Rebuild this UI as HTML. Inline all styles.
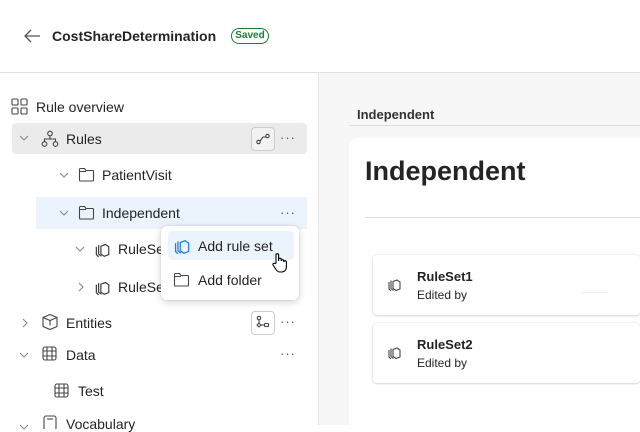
<!DOCTYPE html>
<html><head><style>
*{box-sizing:border-box;margin:0;padding:0}
body{width:640px;height:425px;overflow:hidden;font-family:"Liberation Sans",sans-serif;background:#fff;color:#242424;position:relative}
.abs{position:absolute}
.t{font-size:14px;color:#242424;white-space:nowrap}
svg{position:absolute;fill:none;stroke:#444;stroke-width:1.1}
.dots{position:absolute;font-size:13px;color:#555;letter-spacing:1px}
</style></head><body>
<!-- header -->
<svg style="left:22px;top:27px" width="20" height="18" viewBox="0 0 20 18"><path d="M18 9H3M9 3L3 9l6 6" stroke="#555" stroke-width="1.3"/></svg>
<div class="abs" style="left:52px;top:28px;font-size:14px;font-weight:bold">CostShareDetermination</div>
<div class="abs" style="left:231px;top:28px;width:38px;height:16px;border:1.3px solid #1a7f37;border-radius:8px;font-size:10px;font-weight:bold;color:#1a7f37;text-align:center;line-height:13px">Saved</div>
<div class="abs" style="left:0;top:72px;width:640px;height:1px;background:#e0e0e0"></div>
<!-- right panel -->
<div class="abs" style="left:318px;top:73px;width:322px;height:352px;background:#f7f7f7;border-left:1px solid #e6e6e6"></div>
<div class="abs" style="left:357px;top:107px;font-size:13px;font-weight:bold;color:#333">Independent</div>
<div class="abs" style="left:349px;top:125px;width:291px;height:1px;background:#ddd"></div>
<div class="abs" style="left:349px;top:138px;width:291px;height:287px;background:#fff;border-radius:8px 0 0 0"></div>
<div class="abs" style="left:365px;top:156px;font-size:27px;font-weight:bold;color:#242424">Independent</div>
<div class="abs" style="left:365px;top:217px;width:275px;height:1px;background:#e0e0e0"></div>
<div class="abs" style="left:373px;top:255px;width:267px;height:60px;background:#fff;border-radius:4px;box-shadow:0 0 2px rgba(0,0,0,.15),0 1px 2px rgba(0,0,0,.12)"></div>
<div class="abs" style="left:373px;top:323px;width:267px;height:60px;background:#fff;border-radius:4px;box-shadow:0 0 2px rgba(0,0,0,.15),0 1px 2px rgba(0,0,0,.12)"></div>
<svg style="left:386px;top:276px" width="16" height="16" viewBox="0 0 16 16"><path d="M7 5.5l4-1.5 3 2v7l-4 1.5-3-2z"/><path d="M5 4.5v8l2.5 2M3 6v7l2 2"/></svg>
<svg style="left:386px;top:344px" width="16" height="16" viewBox="0 0 16 16"><path d="M7 5.5l4-1.5 3 2v7l-4 1.5-3-2z"/><path d="M5 4.5v8l2.5 2M3 6v7l2 2"/></svg>
<div class="abs" style="left:417px;top:269px;font-size:13px;font-weight:bold">RuleSet1</div>
<div class="abs" style="left:417px;top:288px;font-size:12px">Edited by</div>
<div class="abs" style="left:582px;top:292px;width:26px;height:1px;background:#eee"></div>
<div class="abs" style="left:417px;top:337px;font-size:13px;font-weight:bold">RuleSet2</div>
<div class="abs" style="left:417px;top:356px;font-size:12px">Edited by</div>
<!-- tree -->
<svg style="left:11px;top:98px" width="17" height="17" viewBox="0 0 17 17"><rect x="1" y="1" width="6" height="6" rx="1"/><rect x="10" y="1" width="6" height="6" rx="1"/><rect x="1" y="10" width="6" height="6" rx="1"/><rect x="10" y="10" width="6" height="6" rx="1"/></svg>
<div class="abs t" style="left:36px;top:99px">Rule overview</div>
<div class="abs" style="left:12px;top:123px;width:295px;height:31px;background:#ebebeb;border-radius:4px"></div>
<svg style="left:19px;top:134px" width="10" height="8" viewBox="0 0 10 8"><path d="M1 2l4 4 4-4" stroke="#888"/></svg>
<svg style="left:41px;top:130px" width="18" height="18" viewBox="0 0 18 18"><circle cx="9" cy="3.5" r="2.3"/><circle cx="3.5" cy="14" r="2.3"/><circle cx="14.5" cy="14" r="2.3"/><path d="M9 6v3M3.5 11.5V9h11v2.5"/></svg>
<div class="abs t" style="left:66px;top:131px">Rules</div>
<div class="abs" style="left:251px;top:127px;width:24px;height:24px;border:1px solid #ccc;border-radius:4px;background:#f2f2f2"></div>
<svg style="left:255px;top:131px" width="16" height="16" viewBox="0 0 16 16"><circle cx="3.5" cy="11" r="1.7"/><circle cx="12.5" cy="5" r="1.7"/><path d="M5 10l3-4 3 0"/></svg>
<div class="dots" style="left:280px;top:130px">···</div>
<svg style="left:59px;top:171px" width="10" height="8" viewBox="0 0 10 8"><path d="M1 2l4 4 4-4" stroke="#888"/></svg>
<svg style="left:78px;top:167px" width="17" height="15" viewBox="0 0 17 15"><path d="M1.5 2.5a1 1 0 011-1h4l1.5 2h6.5a1 1 0 011 1v8.5a1 1 0 01-1 1h-12a1 1 0 01-1-1z M1.5 4.5h6.5"/></svg>
<div class="abs t" style="left:102px;top:167px">PatientVisit</div>
<div class="abs" style="left:36px;top:197px;width:271px;height:32px;background:#ebf3fc"></div>
<svg style="left:59px;top:209px" width="10" height="8" viewBox="0 0 10 8"><path d="M1 2l4 4 4-4" stroke="#888"/></svg>
<svg style="left:78px;top:205px" width="17" height="15" viewBox="0 0 17 15"><path d="M1.5 2.5a1 1 0 011-1h4l1.5 2h6.5a1 1 0 011 1v8.5a1 1 0 01-1 1h-12a1 1 0 01-1-1z M1.5 4.5h6.5"/></svg>
<div class="abs t" style="left:102px;top:205px">Independent</div>
<div class="dots" style="left:280px;top:205px">···</div>
<svg style="left:75px;top:245px" width="10" height="8" viewBox="0 0 10 8"><path d="M1 2l4 4 4-4" stroke="#888"/></svg>
<svg style="left:93px;top:240px" width="18" height="18" viewBox="0 0 16 16"><path d="M7 5.5l4-1.5 3 2v7l-4 1.5-3-2z"/><path d="M5 4.5v8l2.5 2M3 6v7l2 2"/></svg>
<div class="abs t" style="left:118px;top:241px">RuleSet1</div>
<svg style="left:77px;top:282px" width="8" height="10" viewBox="0 0 8 10"><path d="M2 1l4 4-4 4" stroke="#888"/></svg>
<svg style="left:93px;top:278px" width="18" height="18" viewBox="0 0 16 16"><path d="M7 5.5l4-1.5 3 2v7l-4 1.5-3-2z"/><path d="M5 4.5v8l2.5 2M3 6v7l2 2"/></svg>
<div class="abs t" style="left:118px;top:279px">RuleSet2</div>
<svg style="left:21px;top:318px" width="8" height="10" viewBox="0 0 8 10"><path d="M2 1l4 4-4 4" stroke="#888"/></svg>
<svg style="left:41px;top:313px" width="18" height="18" viewBox="0 0 18 18"><path d="M9 1.5l7 3v9l-7 3-7-3v-9z M2 4.5l7 3 7-3M9 7.5v5"/></svg>
<div class="abs t" style="left:66px;top:315px">Entities</div>
<div class="abs" style="left:251px;top:311px;width:24px;height:24px;border:1px solid #ccc;border-radius:4px;background:#fff"></div>
<svg style="left:255px;top:315px" width="16" height="16" viewBox="0 0 16 16"><circle cx="4" cy="3" r="1.7"/><path d="M4 5v3M2 10l2-2 2 2-2 2z"/><rect x="9.5" y="8.5" width="4" height="3" rx="1"/><path d="M6 10h3.5"/></svg>
<div class="dots" style="left:280px;top:314px">···</div>
<svg style="left:19px;top:351px" width="10" height="8" viewBox="0 0 10 8"><path d="M1 2l4 4 4-4" stroke="#888"/></svg>
<svg style="left:42px;top:346px" width="15" height="15" viewBox="0 0 15 15"><rect x="1" y="1" width="13" height="13" rx="2"/><path d="M5 1v13M10 1v13M1 5h13M1 10h13"/></svg>
<div class="abs t" style="left:66px;top:347px">Data</div>
<div class="dots" style="left:280px;top:346px">···</div>
<svg style="left:54px;top:383px" width="15" height="15" viewBox="0 0 15 15"><rect x="1" y="1" width="13" height="13" rx="2"/><path d="M5 1v13M10 1v13M1 5h13M1 10h13"/></svg>
<div class="abs t" style="left:78px;top:383px">Test</div>
<svg style="left:19px;top:423px" width="10" height="8" viewBox="0 0 10 8"><path d="M1 2l4 4 4-4" stroke="#888"/></svg>
<svg style="left:43px;top:415px" width="14" height="14" viewBox="0 0 14 14"><rect x="1" y="1" width="12" height="14" rx="2"/><path d="M4 4h6"/></svg>
<div class="abs t" style="left:66px;top:416px">Vocabulary</div>
<!-- menu -->
<div class="abs" style="left:161px;top:226px;width:138px;height:74px;background:#fff;border-radius:6px;box-shadow:0 2px 8px rgba(0,0,0,.18),0 0 2px rgba(0,0,0,.1)"></div>
<div class="abs" style="left:168px;top:231px;width:126px;height:29px;background:#ebf3fc;border-radius:4px"></div>
<svg style="left:172px;top:236px;stroke:#2b7fd4" width="19" height="19" viewBox="0 0 16 16"><path d="M7 5.5l4-1.5 3 2v7l-4 1.5-3-2z"/><path d="M5 4.5v8l2.5 2M3 6v7l2 2"/></svg>
<div class="abs t" style="left:198px;top:238px">Add rule set</div>
<svg style="left:173px;top:272px" width="17" height="15" viewBox="0 0 17 15"><path d="M1.5 2.5a1 1 0 011-1h4l1.5 2h6.5a1 1 0 011 1v8.5a1 1 0 01-1 1h-12a1 1 0 01-1-1z M1.5 4.5h6.5"/></svg>
<div class="abs t" style="left:198px;top:272px">Add folder</div>
<svg style="left:271px;top:252px;stroke:#000;fill:#fff" width="18" height="22" viewBox="0 0 18 22"><path d="M5 11V3a1.3 1.3 0 012.6 0v6l0-1.5a1.3 1.3 0 012.6 0V9a1.3 1.3 0 012.6 0v1a1.3 1.3 0 012.6 0v5c0 3-2 5-5 5H9c-2 0-3-1-4-2.5L2 13a1.3 1.3 0 012-1.5z"/></svg>
</body></html>
